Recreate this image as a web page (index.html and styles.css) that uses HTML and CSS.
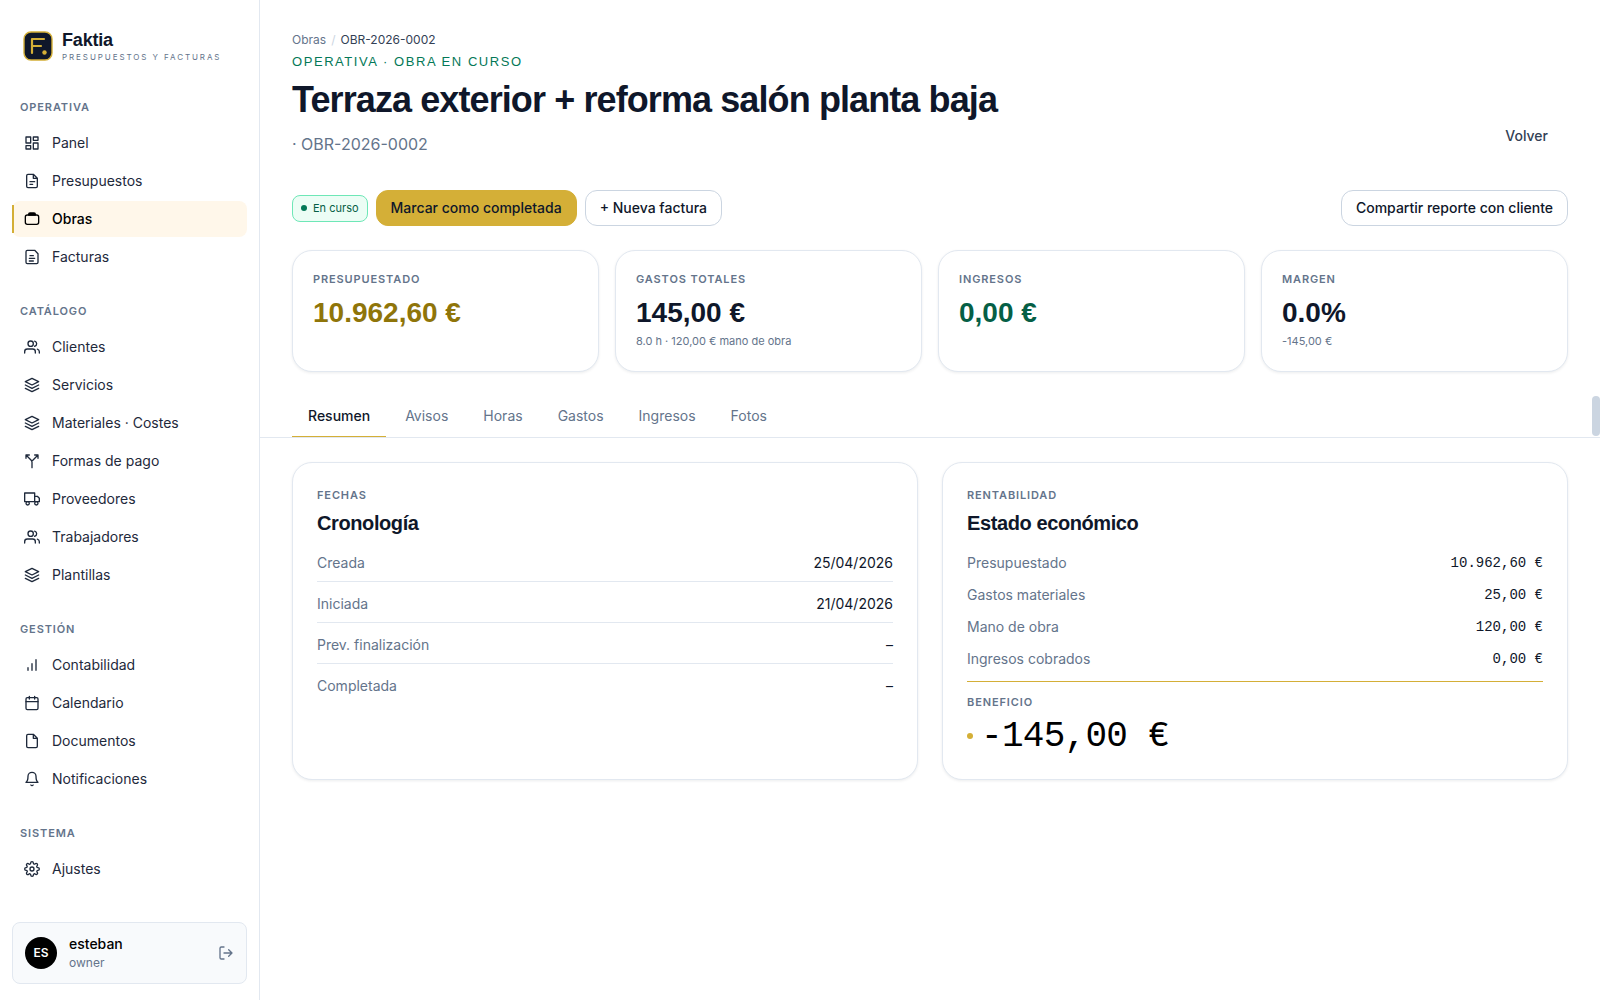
FILE: index.html
```html
<!DOCTYPE html>
<html lang="es">
<head>
    <meta charset="UTF-8">
    <meta name="viewport" content="width=device-width, initial-scale=1.0">
    <title>Faktia - OBR-2026-0002</title>
    <link rel="stylesheet" href="styles.css">
</head>
<body>
    <!-- Shared icons -->
    <svg class="sprite" aria-hidden="true">
        <symbol id="i-users" viewBox="0 0 24 24"><path d="M17 21v-2a4 4 0 0 0-4-4H5a4 4 0 0 0-4 4v2"/><circle cx="9" cy="7" r="4" transform="translate(1 0)"/><path d="M23 21v-2a4 4 0 0 0-3-3.87M16 3.13a4 4 0 0 1 0 7.75"/></symbol>
        <symbol id="i-layers" viewBox="0 0 24 24"><path d="M12 2 2 7l10 5 10-5-10-5zM2 12l10 5 10-5M2 17l10 5 10-5"/></symbol>
    </svg>
    <div class="app">
        <aside class="sidebar">
            <div class="brand">
                <svg class="logo" width="30" height="30" viewBox="0 0 30 30" fill="none">
                    <rect x="1" y="1" width="28" height="28" rx="7" fill="#0f172a" stroke="#d4af37" stroke-width="1.4"/>
                    <path d="M9 22V8h12M9 15h9" stroke="#d4af37" stroke-width="2.2" stroke-linecap="round" stroke-linejoin="round"/>
                    <circle cx="21.5" cy="21.5" r="2.2" fill="#d4af37"/>
                </svg>
                <div>
                    <div class="brand-name">Faktia</div>
                    <div class="brand-tag">PRESUPUESTOS Y FACTURAS</div>
                </div>
            </div>
            <nav class="nav">
                <h2 class="nav-title">Operativa</h2>
                <a class="nav-item" href="#"><svg class="icon" viewBox="0 0 24 24"><path d="M3 3h7v9H3zM14 3h7v5h-7zM14 12h7v9h-7zM3 16h7v5H3z"/></svg>Panel</a>
                <a class="nav-item" href="#"><svg class="icon" viewBox="0 0 24 24"><path d="M14 2H6a2 2 0 0 0-2 2v16a2 2 0 0 0 2 2h12a2 2 0 0 0 2-2V8l-6-6zM14 2v6h6M9 13h7M9 17h4"/></svg>Presupuestos</a>
                <a class="nav-item active" href="#"><svg class="icon" viewBox="0 0 24 24"><rect x="2" y="6" width="20" height="14" rx="3"/><path d="M7 6V5a2 2 0 0 1 2-2h6a2 2 0 0 1 2 2v1z" fill="currentColor"/></svg>Obras</a>
                <a class="nav-item" href="#"><svg class="icon" viewBox="0 0 24 24"><path d="M16 2H5a2 2 0 0 0-2 2v16a2 2 0 0 0 2 2h14a2 2 0 0 0 2-2V7l-5-5zM9 10h5M8 14h8M8 18h6"/></svg>Facturas</a>

                <h2 class="nav-title">Catálogo</h2>
                <a class="nav-item" href="#"><svg class="icon"><use href="#i-users"/></svg>Clientes</a>
                <a class="nav-item" href="#"><svg class="icon"><use href="#i-layers"/></svg>Servicios</a>
                <a class="nav-item" href="#"><svg class="icon"><use href="#i-layers"/></svg>Materiales · Costes</a>
                <a class="nav-item" href="#"><svg class="icon" viewBox="0 0 24 24"><path d="M16 3h5v5M8 3H3v5M12 22v-8.3a4 4 0 0 0-1.2-2.9L3 3M21 3l-7.8 7.8"/></svg>Formas de pago</a>
                <a class="nav-item" href="#"><svg class="icon" viewBox="0 0 24 24"><path d="M1 3h15v13H1zM16 8h4l3 3v5h-7z"/><circle cx="5.5" cy="18.5" r="2.5"/><circle cx="18.5" cy="18.5" r="2.5"/></svg>Proveedores</a>
                <a class="nav-item" href="#"><svg class="icon"><use href="#i-users"/></svg>Trabajadores</a>
                <a class="nav-item" href="#"><svg class="icon"><use href="#i-layers"/></svg>Plantillas</a>

                <h2 class="nav-title">Gestión</h2>
                <a class="nav-item" href="#"><svg class="icon" viewBox="0 0 24 24"><path d="M6 20v-4M12 20V10M18 20V4"/></svg>Contabilidad</a>
                <a class="nav-item" href="#"><svg class="icon" viewBox="0 0 24 24"><rect x="3" y="4" width="18" height="18" rx="2"/><path d="M16 2v4M8 2v4M3 10h18"/></svg>Calendario</a>
                <a class="nav-item" href="#"><svg class="icon" viewBox="0 0 24 24"><path d="M14 2H6a2 2 0 0 0-2 2v16a2 2 0 0 0 2 2h12a2 2 0 0 0 2-2V8zM14 2v6h6"/></svg>Documentos</a>
                <a class="nav-item" href="#"><svg class="icon" viewBox="0 0 24 24"><path d="M18 8A6 6 0 0 0 6 8c0 7-3 9-3 9h18s-3-2-3-9M13.7 21a2 2 0 0 1-3.4 0"/></svg>Notificaciones</a>

                <h2 class="nav-title">Sistema</h2>
                <a class="nav-item" href="#"><svg class="icon" viewBox="0 0 24 24"><circle cx="12" cy="12" r="3"/><path d="M19.4 15a1.65 1.65 0 0 0 .33 1.82l.06.06a2 2 0 1 1-2.83 2.83l-.06-.06a1.65 1.65 0 0 0-2.8 1.17V21a2 2 0 0 1-4 0v-.09a1.65 1.65 0 0 0-2.9-1.17l-.06.06a2 2 0 1 1-2.83-2.83l.06-.06A1.65 1.65 0 0 0 3.2 14H3a2 2 0 0 1 0-4h.09A1.65 1.65 0 0 0 4.3 7.2l-.06-.06a2 2 0 1 1 2.83-2.83l.06.06A1.65 1.65 0 0 0 10 3.2V3a2 2 0 0 1 4 0v.09a1.65 1.65 0 0 0 2.8 1.2l.06-.06a2 2 0 1 1 2.83 2.83l-.06.06A1.65 1.65 0 0 0 20.8 10H21a2 2 0 0 1 0 4h-.09a1.65 1.65 0 0 0-1.51 1z"/></svg>Ajustes</a>
            </nav>
            <div class="user">
                <span class="avatar">ES</span>
                <div class="user-info">
                    <div class="user-name">esteban</div>
                    <div class="user-role">owner</div>
                </div>
                <button class="logout" type="button" aria-label="Cerrar sesión">
                    <svg class="icon" viewBox="0 0 24 24"><path d="M9 21H5a2 2 0 0 1-2-2V5a2 2 0 0 1 2-2h4M16 17l5-5-5-5M21 12H9"/></svg>
                </button>
            </div>
        </aside>

        <main class="main">
            <header class="page-header">
                <div>
                    <div class="breadcrumb"><a href="#">Obras</a><span class="sep">/</span><span>OBR-2026-0002</span></div>
                    <div class="eyebrow">OPERATIVA · OBRA EN CURSO</div>
                    <h1>Terraza exterior + reforma salón planta baja</h1>
                    <p class="subtitle">· OBR-2026-0002</p>
                </div>
                <a class="back" href="#">Volver</a>
            </header>

            <div class="actions">
                <span class="badge">En curso</span>
                <button class="btn btn-gold" type="button">Marcar como completada</button>
                <button class="btn" type="button">+ Nueva factura</button>
                <button class="btn share" type="button">Compartir reporte con cliente</button>
            </div>

            <section class="kpis">
                <div class="card kpi">
                    <div class="label">Presupuestado</div>
                    <div class="kpi-value gold">10.962,60 €</div>
                </div>
                <div class="card kpi">
                    <div class="label">Gastos totales</div>
                    <div class="kpi-value">145,00 €</div>
                    <div class="kpi-note">8.0 h · 120,00 € mano de obra</div>
                </div>
                <div class="card kpi">
                    <div class="label">Ingresos</div>
                    <div class="kpi-value green">0,00 €</div>
                </div>
                <div class="card kpi">
                    <div class="label">Margen</div>
                    <div class="kpi-value">0.0%</div>
                    <div class="kpi-note">-145,00 €</div>
                </div>
            </section>

            <div class="tabs" role="tablist">
                <button class="tab selected" type="button" role="tab" aria-selected="true">Resumen</button>
                <button class="tab" type="button" role="tab">Avisos</button>
                <button class="tab" type="button" role="tab">Horas</button>
                <button class="tab" type="button" role="tab">Gastos</button>
                <button class="tab" type="button" role="tab">Ingresos</button>
                <button class="tab" type="button" role="tab">Fotos</button>
            </div>

            <section class="panels">
                <div class="card panel">
                    <div class="label">Fechas</div>
                    <h3>Cronología</h3>
                    <dl class="dates">
                        <div><dt>Creada</dt><dd>25/04/2026</dd></div>
                        <div><dt>Iniciada</dt><dd>21/04/2026</dd></div>
                        <div><dt>Prev. finalización</dt><dd>–</dd></div>
                        <div><dt>Completada</dt><dd>–</dd></div>
                    </dl>
                </div>
                <div class="card panel">
                    <div class="label">Rentabilidad</div>
                    <h3>Estado económico</h3>
                    <dl class="amounts">
                        <div><dt>Presupuestado</dt><dd>10.962,60 €</dd></div>
                        <div><dt>Gastos materiales</dt><dd>25,00 €</dd></div>
                        <div><dt>Mano de obra</dt><dd>120,00 €</dd></div>
                        <div><dt>Ingresos cobrados</dt><dd>0,00 €</dd></div>
                    </dl>
                    <div class="profit">
                        <div class="label">Beneficio</div>
                        <div class="profit-value">-145,00 €</div>
                    </div>
                </div>
            </section>
        </main>
    </div>
</body>
</html>
```

FILE: styles.css
```css
* { box-sizing: border-box; }
body {
    margin: 0;
    font-family: Inter, 'Liberation Sans', sans-serif;
    font-size: 14px;
    line-height: 20px;
    color: #0f172a;
    background: #fff;
}
h1, h2, h3, p, dl, dd { margin: 0; }
a { color: inherit; text-decoration: none; }
button { font: inherit; color: inherit; cursor: pointer; }
.sprite { display: none; }
.icon {
    width: 16px;
    height: 16px;
    flex: none;
    fill: none;
    stroke: currentColor;
    stroke-width: 2;
    stroke-linecap: round;
    stroke-linejoin: round;
}
.app {
    display: grid;
    grid-template-columns: 260px 1fr;
    min-height: 100vh;
}

/* Sidebar */
.sidebar {
    display: flex;
    flex-direction: column;
    padding: 29px 12px 16px;
    border-right: 1px solid #e2e8f0;
}
.brand {
    display: flex;
    align-items: center;
    gap: 9px;
    padding: 0 11px;
}
.brand-name {
    font-family: 'Liberation Sans', Arial, sans-serif;
    font-size: 18px;
    font-weight: 700;
    line-height: 22px;
    letter-spacing: -0.01em;
}
.brand-tag {
    font-size: 8px;
    line-height: 12px;
    letter-spacing: 0.24em;
    color: #64748b;
}
.nav {
    display: flex;
    flex-direction: column;
    gap: 2px;
    margin-top: 10px;
}
.nav-title {
    padding: 26px 8px 8px;
    font-size: 11px;
    font-weight: 600;
    line-height: 16px;
    letter-spacing: 0.08em;
    text-transform: uppercase;
    color: #64748b;
}
.nav-item {
    display: flex;
    align-items: center;
    gap: 12px;
    height: 36px;
    padding: 0 12px;
    border-radius: 8px;
    color: #1e293b;
}
.nav-item.active {
    position: relative;
    background: #fff7ea;
    color: #000;
    font-weight: 500;
}
.nav-item.active::before {
    content: '';
    position: absolute;
    left: 0;
    top: 4px;
    bottom: 4px;
    width: 2px;
    background: #d4af37;
}
.user {
    display: flex;
    align-items: center;
    gap: 12px;
    margin-top: auto;
    padding: 11px 12px;
    border: 1px solid #e2e8f0;
    border-radius: 8px;
    background: #f8fafc;
}
.avatar {
    display: flex;
    align-items: center;
    justify-content: center;
    width: 32px;
    height: 32px;
    border-radius: 50%;
    background: #000;
    color: #fff;
    font-size: 12px;
    font-weight: 600;
}
.user-info { flex: 1; }
.user-name { color: #000; font-weight: 500; }
.user-role {
    font-size: 12px;
    line-height: 18px;
    color: #64748b;
}
.logout {
    display: flex;
    padding: 0;
    border: 0;
    background: none;
    color: #64748b;
}

/* Page header */
.main { padding: 32px; }
.page-header {
    display: flex;
    justify-content: space-between;
    align-items: flex-end;
}
.breadcrumb {
    display: flex;
    gap: 5px;
    font-size: 12px;
    line-height: 16px;
    color: #334155;
}
.breadcrumb a { color: #64748b; }
.breadcrumb .sep { color: #cbd5e1; }
.eyebrow {
    margin-top: 4px;
    font-family: 'Liberation Sans', Arial, sans-serif;
    font-size: 13px;
    letter-spacing: 0.12em;
    color: #047857;
}
h1 {
    margin-top: 8px;
    font-family: 'Liberation Sans', Arial, sans-serif;
    font-size: 36px;
    line-height: 40px;
    letter-spacing: -0.025em;
}
.subtitle {
    margin-top: 12px;
    font-size: 16px;
    line-height: 24px;
    color: #64748b;
}
.back {
    padding: 10px 20px;
    color: #334155;
    font-weight: 500;
}
.actions {
    display: flex;
    align-items: center;
    gap: 8px;
    margin-top: 34px;
}
.badge {
    display: flex;
    align-items: center;
    gap: 6px;
    padding: 4px 8px;
    border: 1px solid #6ee7b7;
    border-radius: 8px;
    background: #ecfdf5;
    color: #065f46;
    font-size: 11px;
    line-height: 17px;
}
.badge::before {
    content: '';
    width: 6px;
    height: 6px;
    border-radius: 50%;
    background: #047857;
}
.btn {
    padding: 7px 14px;
    border: 1px solid #cbd5e1;
    border-radius: 12px;
    background: #fff;
    font-weight: 500;
}
.btn-gold {
    border-color: #d4af37;
    background: #d4af37;
}
.share { margin-left: auto; }

/* Cards */
.card {
    border: 1px solid #e2e8f0;
    border-radius: 20px;
    background: #fff;
    box-shadow: 0 1px 3px rgba(15, 23, 42, 0.08);
}
.label {
    font-size: 11px;
    font-weight: 600;
    line-height: 16px;
    letter-spacing: 0.08em;
    text-transform: uppercase;
    color: #64748b;
}
.kpis {
    display: grid;
    grid-template-columns: repeat(4, 1fr);
    gap: 16px;
    margin-top: 24px;
}
.kpi { padding: 20px 20px 22px; }
.kpi-value {
    margin-top: 8px;
    font-family: 'Liberation Sans', Arial, sans-serif;
    font-size: 28px;
    font-weight: 700;
    line-height: 36px;
}
.kpi-value.gold { color: #8f750a; }
.kpi-value.green { color: #065f46; }
.kpi-note {
    margin-top: 2px;
    font-size: 11px;
    line-height: 16px;
    color: #64748b;
}

/* Tabs */
.tabs {
    position: relative;
    display: flex;
    gap: 3px;
    margin: 24px -32px 0;
    padding: 0 32px;
    border-bottom: 1px solid #e2e8f0;
}
/* scroll thumb at the end of the tab bar */
.tabs::after {
    content: '';
    position: absolute;
    top: 0;
    right: 0;
    width: 8px;
    height: 40px;
    border-radius: 4px;
    background: #cbd5e1;
}
.tab {
    padding: 10px 16px;
    border: 0;
    border-bottom: 1px solid transparent;
    background: none;
    color: #64748b;
}
.tab.selected {
    border-bottom-color: #d4af37;
    color: #0f172a;
    font-weight: 500;
}

/* Panels */
.panels {
    display: grid;
    grid-template-columns: repeat(2, 1fr);
    gap: 24px;
    margin-top: 24px;
}
.panel { padding: 24px; }
h3 {
    margin-top: 6px;
    font-family: 'Liberation Sans', Arial, sans-serif;
    font-size: 20px;
    line-height: 28px;
    letter-spacing: -0.02em;
}
dl {
    display: flex;
    flex-direction: column;
}
dl div {
    display: flex;
    justify-content: space-between;
}
dt { color: #64748b; }
.dates {
    gap: 4px;
    margin-top: 8px;
}
.dates div {
    padding: 8px 0;
    border-bottom: 1px solid #e2e8f0;
}
.dates div:last-child { border-bottom: 0; }
.amounts {
    gap: 12px;
    margin-top: 16px;
}
.amounts dd, .profit-value {
    font-family: 'Liberation Mono', monospace;
}
.profit {
    margin-top: 12px;
    padding-top: 12px;
    border-top: 1px solid #d4af37;
}
.profit-value {
    margin-top: 9px;
    color: #000;
    font-size: 36px;
    line-height: 36px;
    letter-spacing: -0.02em;
}
.profit-value::before {
    content: '';
    display: inline-block;
    width: 6px;
    height: 6px;
    margin-right: 8px;
    border-radius: 50%;
    background: #d4af37;
    vertical-align: middle;
}
```
